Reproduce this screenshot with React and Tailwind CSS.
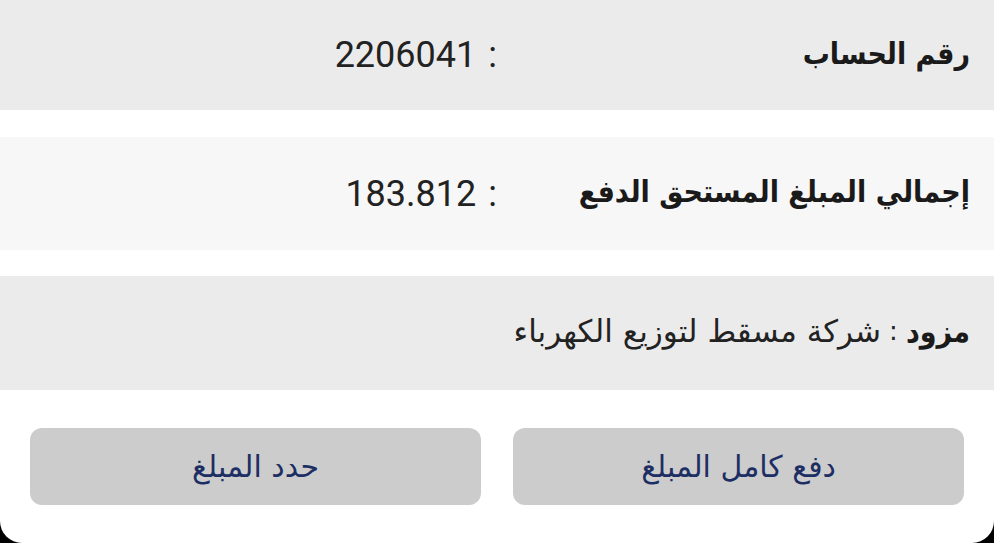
const arabic = { fontFamily: '"DejaVu Sans", "Noto Sans", sans-serif' };
const arabicNarrow = { fontFamily: '"DejaVu Sans Condensed", "DejaVu Sans", sans-serif' };

function InfoRow({ label, value, tone }) {
  return (
    <div className={`grid grid-cols-2 items-center ${tone}`}>
      <div className="pr-6 pb-1 text-[30px] font-bold text-[#1a1a1a]" style={arabicNarrow}>
        {label}
      </div>
      <div className="flex items-center gap-3 text-[36px] text-[#222]" style={{ fontFamily: "Roboto, sans-serif" }}>
        <span>:</span>
        <span>{value}</span>
      </div>
    </div>
  );
}

export default function App() {
  return (
    <div className="bg-black w-[994px] h-[543px]">
      <div dir="rtl" className="bg-white h-[543px] rounded-b-[22px] overflow-hidden flex flex-col">
        <InfoRow label="رقم الحساب" value="2206041" tone="bg-[#ebebeb] h-[110px]" />
        <div className="h-[27px] shrink-0" />
        <InfoRow label="إجمالي المبلغ المستحق الدفع" value="183.812" tone="bg-[#f7f7f7] h-[113px]" />
        <div className="h-[26px] shrink-0" />
        <div className="bg-[#ebebeb] h-[114px] shrink-0 flex items-center pr-6 pb-1 text-[#222]">
          <span className="font-bold text-[#1a1a1a] text-[30px]" style={arabicNarrow}>مزود</span>
          <span className="mx-2 text-[26px]" style={arabic}>:</span>
          <span className="text-[31px]" style={arabic}>شركة مسقط لتوزيع الكهرباء</span>
        </div>
        <div className="flex gap-8 px-[30px] pt-[38px]">
          <button className="flex-1 h-[77px] rounded-xl bg-[#cccccc] text-[#1c2e63] text-[30px]" style={arabic}>
            دفع كامل المبلغ
          </button>
          <button className="flex-1 h-[77px] rounded-xl bg-[#cccccc] text-[#1c2e63] text-[30px]" style={arabic}>
            حدد المبلغ
          </button>
        </div>
      </div>
    </div>
  );
}
